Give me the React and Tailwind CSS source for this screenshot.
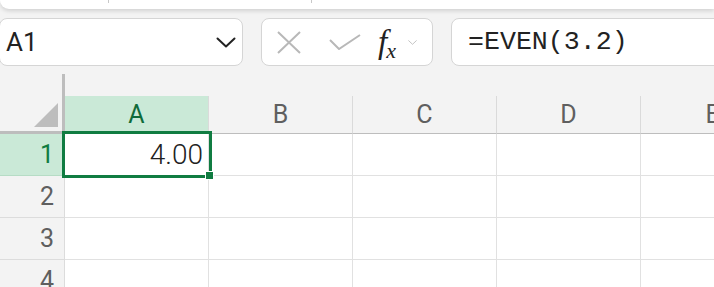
import React from "react";

const cols = ["A", "B", "C", "D", "E"];
const rows = [1, 2, 3, 4];

function Chevron({ className }) {
  return (
    <svg className={className} viewBox="0 0 20 11" fill="none" stroke="currentColor" strokeWidth={2} strokeLinecap="round" strokeLinejoin="round">
      <path d="M1.5 1.5l8.5 8 8.5-8" />
    </svg>
  );
}

export default function App() {
  return (
    <div className="w-[714px] h-[287px] overflow-hidden bg-[#f3f3f3] font-['Roboto','Liberation_Sans',sans-serif]">
      {/* ribbon bottom edge */}
      <div className="h-[9px] bg-white rounded-bl-[10px] shadow-[0_2px_4px_rgba(0,0,0,0.14)] flex">
        <div className="ml-[108px] w-px h-[3px] bg-[#c8c8c8]" />
        <div className="ml-[202px] w-px h-[3px] bg-[#c8c8c8]" />
      </div>

      {/* formula bar */}
      <div className="mt-[9px] h-[48px] flex gap-[18px]">
        <div className="w-[244px] -ml-px shrink-0 bg-white border border-[#d5d5d5] rounded-[8px] flex items-center justify-between pl-[6px] pr-[6px]">
          <span className="text-[26px] text-[#222] leading-none">A1</span>
          <Chevron className="w-[20px] h-[11px] text-[#222]" />
        </div>
        <div className="w-[172px] shrink-0 bg-white border border-[#d5d5d5] rounded-[8px] flex items-center pl-[15px]">
          <svg className="w-[24px] h-[23px] text-[#b8b8b8]" viewBox="0 0 24 23" fill="none" stroke="currentColor" strokeWidth={2}>
            <path d="M1 1l22 21M23 1L1 22" />
          </svg>
          <svg className="ml-[28px] w-[32px] h-[16px] text-[#b8b8b8]" viewBox="0 0 32 16" fill="none" stroke="currentColor" strokeWidth={2}>
            <path d="M1 6l9 9L31 1" />
          </svg>
          <span className="ml-[17px] flex items-end font-['Liberation_Serif',serif] text-[#222] leading-none">
            <span className="italic text-[33px]">f</span>
            <span className="italic text-[22px] -ml-[1px] mb-[-3px]">x</span>
          </span>
          <Chevron className="ml-[12px] w-[9px] h-[5px] text-[#bdbdbd]" />
        </div>
        <div className="flex-1 -mr-[12px] bg-white border border-[#d5d5d5] rounded-[8px] flex items-center pl-[16px]">
          <span className="font-['Liberation_Mono',monospace] text-[26.6px] text-[#222] leading-none">=EVEN(3.2)</span>
        </div>
      </div>

      {/* grid */}
      <div className="mt-[8px]">
        <div className="flex h-[60px]">
          <div className="w-[65px] shrink-0 border-r-[3px] border-b-[3px] border-[#bdbdbd] flex items-end justify-end p-[4px]">
            <svg className="w-[24px] h-[24px]" viewBox="0 0 24 24">
              <polygon points="24,0 24,24 0,24" fill="#bdbdbd" />
            </svg>
          </div>
          {cols.map((c) => (
            <div
              key={c}
              className={`w-[144px] shrink-0 h-[38px] self-end border-r border-[#dadada] border-b-[#bdbdbd] border-b flex items-center justify-center text-[25px] leading-none ${
                c === "A" ? "bg-[#cae9d7] text-[#0f6b3a]" : "text-[#5f5f5f]"
              }`}
            >
              {c}
            </div>
          ))}
        </div>

        {rows.map((r) => (
          <div key={r} className="flex h-[42px]">
            <div
              className={`w-[65px] shrink-0 border-r border-b border-[#dcdcdc] flex items-center justify-end pr-[10px] text-[25px] leading-none ${
                r === 1 ? "bg-[#cae9d7] text-[#107c41] border-r-[#107c41] border-b-[#b6dcc5]" : "text-[#5f5f5f]"
              }`}
            >
              {r}
            </div>
            {cols.map((c) => (
              <div
                key={c}
                className={`relative w-[144px] shrink-0 border-r border-b border-[#e1e1e1] bg-white flex items-center justify-end pr-[5px] ${
                  r === 1 && c === "A" ? "z-10" : ""
                }`}
              >
                {r === 1 && c === "A" && (
                  <>
                    <span className="text-[28px] font-light text-[#222] leading-none">4.00</span>
                    <div className="absolute -left-[3px] -top-[3px] w-[150px] h-[47px] border-[3px] border-[#107c41]" />
                    <div className="absolute left-[140px] top-[37px] w-[9px] h-[9px] bg-[#107c41] border border-white" />
                  </>
                )}
              </div>
            ))}
          </div>
        ))}
      </div>
    </div>
  );
}
